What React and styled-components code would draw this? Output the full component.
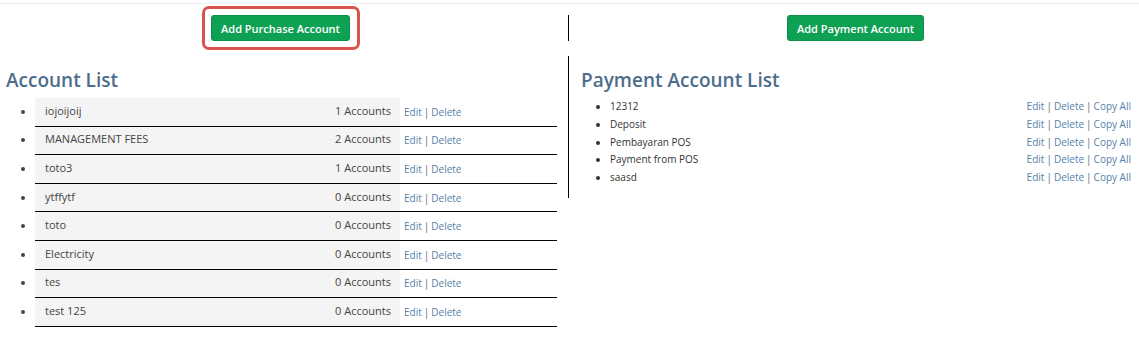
import React from 'react'
import styled, { createGlobalStyle } from 'styled-components'

const GlobalStyle = createGlobalStyle`
  body {
    margin: 0;
    background: #fff;
    font-family: 'Open Sans', 'Noto Sans', sans-serif;
    color: #444;
  }
`

const Page = styled.div`
  margin-top: 3px;
  border-top: 1px solid #ececec;
  width: 1139px;
`

const Row = styled.div`
  display: flex;
  align-items: flex-start;
  padding-top: ${(p) => p.$top || 0}px;
`

const Column = styled.div`
  width: ${(p) => p.$width}px;
  box-sizing: border-box;
  border-left: ${(p) => (p.$divider ? '1px solid #000' : 'none')};
  padding: ${(p) => p.$pad || '0'};
  display: ${(p) => (p.$center ? 'flex' : 'block')};
  justify-content: center;
`

const Highlight = styled.div`
  position: relative;
  display: inline-flex;

  &::after {
    content: '';
    position: absolute;
    inset: -9px -10px -9px -9px;
    border: 3px solid #d9534f;
    border-radius: 7px;
    pointer-events: none;
  }
`

const Button = styled.button`
  height: 26px;
  padding: 0 9px;
  border: 1px solid #0b8f46;
  border-radius: 3px;
  background: #0fa153;
  color: #fff;
  font-family: inherit;
  font-size: 11px;
  font-weight: 600;
  cursor: pointer;
`

const Title = styled.h2`
  margin: 12px 0 6px ${(p) => p.$indent}px;
  font-size: 19px;
  line-height: 24px;
  font-weight: 600;
  color: #4d6d8c;
`

const AccountList = styled.ul`
  margin: 0;
  padding: 0 0 0 35px;
  list-style: disc;
  width: 557px;
  box-sizing: border-box;
`

const AccountItem = styled.li`
  display: list-item;
  border-bottom: 1px solid #000;
  height: 27.6px;
  font-size: 11px;
  color: #444;

  &::marker {
    font-size: 10px;
  }
`

const ItemInner = styled.div`
  display: flex;
  height: 100%;
  align-items: stretch;
`

const NameCell = styled.div`
  width: 365px;
  background: #f4f4f4;
  display: flex;
  justify-content: space-between;
  align-items: center;
  padding: 0 9px 3px 10px;
  box-sizing: border-box;
`

const Links = styled.div`
  display: flex;
  align-items: center;
  padding: ${(p) => (p.$left ? '0 0 0 4px' : '0')};
  color: #555;
  font-size: ${(p) => p.$size}px;
  white-space: nowrap;
`

const Link = styled.a`
  color: #5581a8;
  text-decoration: none;
  cursor: pointer;
`

const Sep = styled.span`
  margin: 0 2px;
  color: #666;
`

const PaymentList = styled.ul`
  margin: 1px 0 11px;
  padding: 0 0 0 29px;
  list-style: disc;
`

const PaymentItem = styled.li`
  font-size: 10px;
  line-height: 17.8px;
  color: #333;
`

const PaymentInner = styled.div`
  display: flex;
  justify-content: space-between;
`

const accounts = [
  { name: 'iojoijoij', count: 1 },
  { name: 'MANAGEMENT FEES', count: 2 },
  { name: 'toto3', count: 1 },
  { name: 'ytffytf', count: 0 },
  { name: 'toto', count: 0 },
  { name: 'Electricity', count: 0 },
  { name: 'tes', count: 0 },
  { name: 'test 125', count: 0 },
]

const payments = ['12312', 'Deposit', 'Pembayaran POS', 'Payment from POS', 'saasd']

export default function App() {
  return (
    <>
      <GlobalStyle />
      <Page>
        <Row $top={11}>
          <Column $width={568} $center $pad="0 7px 0 0">
            <Highlight>
              <Button>Add Purchase Account</Button>
            </Highlight>
          </Column>
          <Column $width={571} $divider $center $pad="0 0 0 3px">
            <Button>Add Payment Account</Button>
          </Column>
        </Row>
        <Row $top={15}>
          <Column $width={568}>
            <Title $indent={6}>Account List</Title>
            <AccountList>
              {accounts.map((a) => (
                <AccountItem key={a.name}>
                  <ItemInner>
                    <NameCell>
                      <span>{a.name}</span>
                      <span>{a.count} Accounts</span>
                    </NameCell>
                    <Links $left $size={10}>
                      <Link>Edit</Link>
                      <Sep>|</Sep>
                      <Link>Delete</Link>
                    </Links>
                  </ItemInner>
                </AccountItem>
              ))}
            </AccountList>
          </Column>
          <Column $width={571} $divider $pad="0 8px 0 12px">
            <Title $indent={0}>Payment Account List</Title>
            <PaymentList>
              {payments.map((p) => (
                <PaymentItem key={p}>
                  <PaymentInner>
                    <span>{p}</span>
                    <Links $size={10}>
                      <Link>Edit</Link>
                      <Sep>|</Sep>
                      <Link>Delete</Link>
                      <Sep>|</Sep>
                      <Link>Copy All</Link>
                    </Links>
                  </PaymentInner>
                </PaymentItem>
              ))}
            </PaymentList>
          </Column>
        </Row>
      </Page>
    </>
  )
}
